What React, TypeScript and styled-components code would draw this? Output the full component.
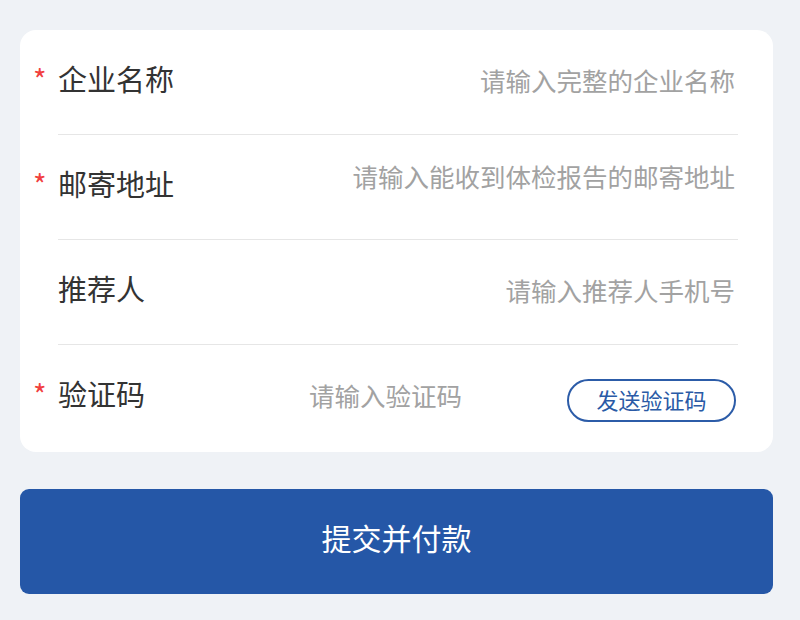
import React from "react";
import styled, { createGlobalStyle } from "styled-components";

const GlobalStyle = createGlobalStyle`
    html, body {
        margin: 0;
        padding: 0;
        background: #eff2f6;
        font-family: "Noto Sans CJK SC", "Noto Sans", sans-serif;
    }
`;

const Page = styled.div`
    width: 800px;
    height: 620px;
    padding: 30px 0 0 20px;
    box-sizing: border-box;
    background: #eff2f6;
`;

const Card = styled.div`
    width: 753px;
    background: #ffffff;
    border-radius: 16px;
    padding-bottom: 2px;
`;

const Row = styled.div`
    display: flex;
    align-items: flex-start;
    height: 105px;
`;

const StarCol = styled.div`
    width: 38px;
    flex-shrink: 0;
    padding: 33px 0 0 13px;
    box-sizing: border-box;
    font-size: 29px;
    line-height: 30px;
    color: #f1403f;
`;

const Body = styled.div<{ $last?: boolean }>`
    flex: 1;
    display: flex;
    align-items: flex-start;
    height: 100%;
    margin-right: 35px;
    box-sizing: border-box;
    border-bottom: ${(p) => (p.$last ? "none" : "1px solid #e6e6e6")};
`;

const Label = styled.div`
    flex-shrink: 0;
    width: 116px;
    padding-top: 33px;
    font-size: 29px;
    line-height: 30px;
    color: #333333;
`;

const fieldCss = `
    border: none;
    outline: none;
    background: transparent;
    padding: 0;
    font-family: "Noto Sans CJK SC", "Noto Sans", sans-serif;
    font-size: 25.5px;
    line-height: 30px;
    color: #333333;
    &::placeholder {
        color: #a2a2a2;
    }
`;

const Field = styled.input`
    ${fieldCss}
    flex: 1;
    min-width: 0;
    height: 30px;
    margin: 35px 3px 0 0;
    text-align: right;
`;

const AreaField = styled.textarea`
    ${fieldCss}
    flex: 1;
    min-width: 0;
    height: 60px;
    margin: 26px 3px 0 0;
    text-align: right;
    resize: none;
    overflow: hidden;
`;

const CodeField = styled.input`
    ${fieldCss}
    width: 220px;
    height: 30px;
    margin: 35px 0 0 135px;
    text-align: left;
`;

const SendButton = styled.button`
    margin: 34px 2px 0 auto;
    width: 169px;
    height: 43px;
    box-sizing: border-box;
    border: 2px solid #2c5ca8;
    border-radius: 22px;
    background: #ffffff;
    color: #2a5aa6;
    font-family: "Noto Sans CJK SC", "Noto Sans", sans-serif;
    font-size: 22px;
    line-height: 1;
    padding: 0 0 4px;
`;

const SubmitButton = styled.button`
    display: block;
    margin-top: 37px;
    width: 753px;
    height: 105px;
    border: none;
    border-radius: 9px;
    background: #2557a7;
    color: #ffffff;
    font-family: "Noto Sans CJK SC", "Noto Sans", sans-serif;
    font-size: 30px;
    line-height: 1;
    padding: 0 0 10px;
`;

const fields = [
    { label: "企业名称", placeholder: "请输入完整的企业名称", required: true },
    { label: "邮寄地址", placeholder: "请输入能收到体检报告的邮寄地址", required: true, multiline: true },
    { label: "推荐人", placeholder: "请输入推荐人手机号", required: false },
];

export default function App() {
    return (
        <Page>
            <GlobalStyle />
            <Card>
                {fields.map((f) => (
                    <Row key={f.label}>
                        <StarCol>{f.required ? "*" : ""}</StarCol>
                        <Body>
                            <Label>{f.label}</Label>
                            {f.multiline ? (
                                <AreaField placeholder={f.placeholder} rows={2} />
                            ) : (
                                <Field placeholder={f.placeholder} />
                            )}
                        </Body>
                    </Row>
                ))}
                <Row>
                    <StarCol>*</StarCol>
                    <Body $last>
                        <Label>验证码</Label>
                        <CodeField placeholder="请输入验证码" />
                        <SendButton type="button">发送验证码</SendButton>
                    </Body>
                </Row>
            </Card>
            <SubmitButton type="button">提交并付款</SubmitButton>
        </Page>
    );
}
